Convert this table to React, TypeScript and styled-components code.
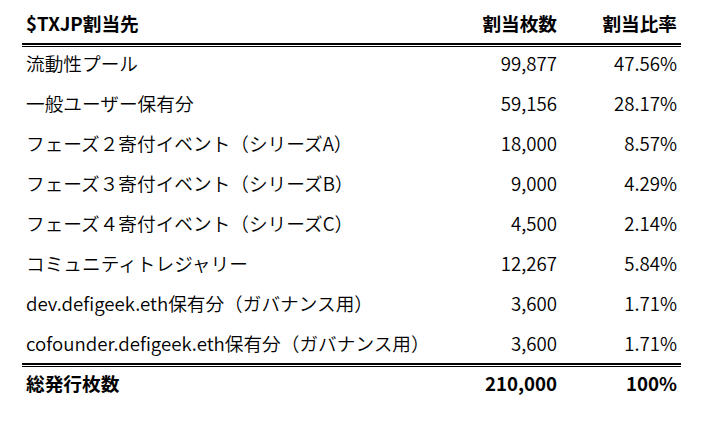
import React from 'react';
import styled, { createGlobalStyle } from 'styled-components';

type Allocation = {
  name: string;
  count: string;
  ratio: string;
};

const ALLOCATIONS: Allocation[] = [
  { name: '流動性プール', count: '99,877', ratio: '47.56%' },
  { name: '一般ユーザー保有分', count: '59,156', ratio: '28.17%' },
  { name: 'フェーズ２寄付イベント（シリーズA）', count: '18,000', ratio: '8.57%' },
  { name: 'フェーズ３寄付イベント（シリーズB）', count: '9,000', ratio: '4.29%' },
  { name: 'フェーズ４寄付イベント（シリーズC）', count: '4,500', ratio: '2.14%' },
  { name: 'コミュニティトレジャリー', count: '12,267', ratio: '5.84%' },
  { name: 'dev.defigeek.eth保有分（ガバナンス用）', count: '3,600', ratio: '1.71%' },
  { name: 'cofounder.defigeek.eth保有分（ガバナンス用）', count: '3,600', ratio: '1.71%' }
];

const GlobalStyle = createGlobalStyle`
  html, body {
    margin: 0;
    padding: 0;
    background: #fff;
  }

  body {
    font-family: 'Noto Sans CJK JP', 'Noto Sans', sans-serif;
    color: #000;
  }
`;

const Table = styled.div`
  margin: 4px 0 0 22px;
  width: 659px;
  font-size: 18.67px;
`;

const Row = styled.div<{ $bold?: boolean }>`
  display: grid;
  grid-template-columns: 1fr 120px 120px;
  align-items: center;
  height: 40px;
  font-weight: ${({ $bold }) => ($bold ? 700 : 350)};
`;

const Cell = styled.div<{ $align?: 'left' | 'right' }>`
  padding: 0 4px 2px;
  line-height: 1;
  white-space: nowrap;
  text-align: ${({ $align = 'left' }) => $align};
`;

// drawn across the row boundary, like a spreadsheet border
const DoubleRule = styled.div`
  height: 1px;
  margin: -1px 0 -3px;
  border-top: 2px solid #000;
  border-bottom: 1px solid #000;
  position: relative;
`;

export default function App (): React.ReactElement {
  return (
    <>
      <GlobalStyle />
      <Table>
        <Row $bold>
          <Cell>$TXJP割当先</Cell>
          <Cell $align='right'>割当枚数</Cell>
          <Cell $align='right'>割当比率</Cell>
        </Row>
        <DoubleRule />
        {ALLOCATIONS.map((item) => (
          <Row key={item.name}>
            <Cell>{item.name}</Cell>
            <Cell $align='right'>{item.count}</Cell>
            <Cell $align='right'>{item.ratio}</Cell>
          </Row>
        ))}
        <DoubleRule />
        <Row $bold>
          <Cell>総発行枚数</Cell>
          <Cell $align='right'>210,000</Cell>
          <Cell $align='right'>100%</Cell>
        </Row>
      </Table>
    </>
  );
}
